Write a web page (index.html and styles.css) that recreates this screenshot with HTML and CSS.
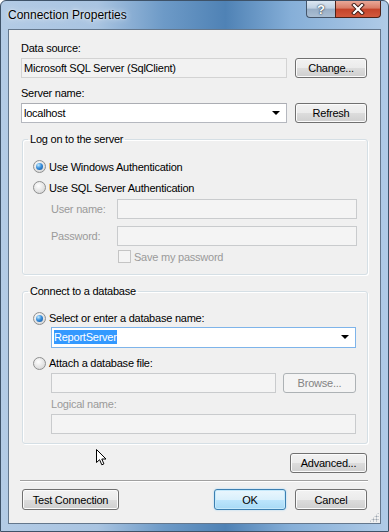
FILE: index.html
```html
<!DOCTYPE html>
<html lang="en">
<head>
    <meta charset="UTF-8">
    <title>Connection Properties</title>
    <link rel="stylesheet" href="styles.css">
</head>
<body>
    <div class="window">
        <div class="titlebar">
            <span class="title">Connection Properties</span>
            <div class="caption-buttons">
                <span class="cap-btn help">?</span>
                <span class="cap-btn close">
                    <svg width="14" height="12" viewBox="0 0 14 12">
                        <path d="M3 2 L11 10 M11 2 L3 10" stroke="#3b1a14" stroke-width="4" stroke-linecap="square"/>
                        <path d="M3 2 L11 10 M11 2 L3 10" stroke="#fff" stroke-width="2.2" stroke-linecap="square"/>
                    </svg>
                </span>
            </div>
        </div>

        <div class="client">
            <span class="lbl">Data source:</span>
            <div class="row">
                <div class="field readonly">Microsoft SQL Server (SqlClient)</div>
                <button class="btn">Change...</button>
            </div>

            <span class="lbl gap-top">Server name:</span>
            <div class="row">
                <div class="field combo">localhost<span class="arrow"></span></div>
                <button class="btn">Refresh</button>
            </div>

            <fieldset class="group group-logon">
                <legend>Log on to the server</legend>
                <div class="opt tall"><span class="radio checked"></span>Use Windows Authentication</div>
                <div class="opt tall"><span class="radio"></span>Use SQL Server Authentication</div>
                <div class="creds">
                    <span class="dim">User name:</span>
                    <div class="field disabled"></div>
                    <span class="dim">Password:</span>
                    <div class="field disabled"></div>
                </div>
                <div class="check-row"><span class="checkbox"></span><span class="dim">Save my password</span></div>
            </fieldset>

            <fieldset class="group group-db">
                <legend>Connect to a database</legend>
                <div class="opt"><span class="radio checked"></span>Select or enter a database name:</div>
                <div class="field combo focus indent"><span class="selected">ReportServer</span><span class="arrow"></span></div>
                <div class="opt opt-attach"><span class="radio"></span>Attach a database file:</div>
                <div class="row file-row indent">
                    <div class="field disabled"></div>
                    <button class="btn off browse">Browse...</button>
                </div>
                <span class="lbl dim indent logical">Logical name:</span>
                <div class="field disabled indent logical-field"></div>
            </fieldset>

            <button class="btn advanced">Advanced...</button>

            <div class="separator"></div>

            <div class="footer">
                <button class="btn test">Test Connection</button>
                <button class="btn ok">OK</button>
                <button class="btn">Cancel</button>
            </div>

            <svg class="pointer" width="13" height="17" viewBox="0 0 13 17">
                <path d="M0.5 0.5 L0.5 13.5 L3.6 10.7 L5.8 15.8 L7.9 14.9 L5.8 10 L10 10 Z" fill="#fff" stroke="#000" stroke-width="1" stroke-linejoin="round"/>
            </svg>
            <span class="grip"></span>
        </div>
    </div>
</body>
</html>
```

FILE: styles.css
```css
* {
    box-sizing: border-box;
}
body {
    margin: 0;
    font-family: "Liberation Sans", Arial, sans-serif;
    font-size: 11px;
    letter-spacing: -0.23px;
    color: #000;
    background: #fff;
}
.window {
    width: 389px;
    height: 532px;
    display: flex;
    flex-direction: column;
    border: 1px solid #3e5268;
    border-radius: 6px 6px 0 0;
    background: linear-gradient(90deg, #b3cbe5 0%, #a9c4e1 25%, #6d9ac7 42%, #4f82b5 58%, #86afd8 75%, #b0cbe7 100%);
}
.titlebar {
    height: 28px;
    display: flex;
    padding-left: 7px;
}
.title {
    font-size: 12px;
    letter-spacing: 0;
    line-height: 16px;
    margin-top: 6px;
    text-shadow: 0 0 6px rgba(255, 255, 255, 0.9), 0 0 2px rgba(255, 255, 255, 0.8);
}
.caption-buttons {
    margin-left: auto;
    margin-right: 7px;
    display: flex;
    align-self: flex-start;
}
.cap-btn {
    height: 17px;
    display: flex;
    align-items: center;
    justify-content: center;
    border: 1px solid #44556a;
    border-top: none;
}
.help {
    width: 29px;
    border-radius: 0 0 0 4px;
    border-right: none;
    background: linear-gradient(#dbe6f1 0%, #bfd0e2 45%, #98aec6 50%, #aabed3 100%);
    color: #fff;
    font-weight: bold;
    font-size: 13px;
    letter-spacing: 0;
    text-shadow: 0 0 2px #24354a, 0 0 1px #24354a;
}
.close {
    width: 46px;
    border-color: #4c2219;
    border-radius: 0 0 4px 0;
    background: linear-gradient(#e9a898 0%, #d97c66 45%, #c4432a 50%, #d2593d 100%);
}
.client {
    flex: 1;
    position: relative;
    margin: 0 7px 7px 7px;
    border: 1px solid #64778c;
    background: #f0f0f0;
    padding: 10px 13px 0 12px;
}
.lbl {
    display: block;
    height: 16px;
    line-height: 16px;
}
.gap-top {
    margin-top: 7px;
}
.row {
    display: flex;
    gap: 8px;
    margin-top: 2px;
}
.field {
    flex: 1;
    height: 20px;
    line-height: 18px;
    padding-left: 2px;
    border: 1px solid #b5b8bf;
    border-top-color: #abadb3;
    background: #fff;
    white-space: nowrap;
}
.readonly {
    background: #f2f2f2;
    border-color: #d3d3d3;
}
.disabled {
    background: #f4f4f4;
    border-color: #c9cbcd;
}
.combo {
    position: relative;
}
.arrow {
    position: absolute;
    right: 6px;
    top: 7px;
    width: 0;
    height: 0;
    border-left: 4px solid transparent;
    border-right: 4px solid transparent;
    border-top: 4px solid #000;
}
.focus {
    height: 21px;
    line-height: 19px;
    border-color: #7eb4ea;
}
.selected {
    background: #3399ff;
    color: #fff;
    padding: 1px 0;
}
.btn {
    width: 72px;
    height: 20px;
    padding: 0;
    font-family: inherit;
    font-size: 11px;
    letter-spacing: -0.23px;
    color: #000;
    border: 1px solid #707070;
    border-radius: 3px;
    background: linear-gradient(#f2f2f2 0%, #ebebeb 50%, #dddddd 50%, #cfcfcf 100%);
    box-shadow: inset 0 0 0 1px #fbfbfb;
}
.btn.off {
    color: #838383;
    border-color: #adb2b5;
    background: #f4f4f4;
    box-shadow: none;
}
.group {
    margin: 8px -1px 0 1px;
    border: 1px solid #d5dfe5;
    border-radius: 3px;
    box-shadow: inset 1px 1px 0 #fff, 1px 1px 0 #fff;
    min-width: 0;
}
.group legend {
    padding: 0 2px;
    margin-left: -5px;
    line-height: 16px;
    height: 16px;
}
.group-logon {
    padding: 9px 10px 11px 10px;
}
.group-db {
    padding: 10px 11px 9px 10px;
}
.opt {
    display: flex;
    align-items: center;
    gap: 3px;
    height: 18px;
}
.opt.tall {
    height: 21px;
}
.opt-attach {
    margin-top: 6px;
}
.radio {
    width: 13px;
    height: 13px;
    border-radius: 50%;
    border: 1px solid #8e8f8f;
    background: radial-gradient(circle at 40% 35%, #ffffff 0%, #e6e6e6 50%, #cfcfcf 100%);
    display: flex;
    align-items: center;
    justify-content: center;
}
.radio.checked::after {
    content: "";
    width: 7px;
    height: 7px;
    border-radius: 50%;
    background: radial-gradient(circle at 35% 30%, #c4ebfd 0%, #3a8fdb 45%, #0d4f99 100%);
}
.creds {
    display: grid;
    grid-template-columns: 66px 1fr;
    row-gap: 7px;
    align-items: center;
    margin-top: 1px;
    padding-left: 18px;
}
.dim {
    color: #9a9a9a;
}
.check-row {
    display: flex;
    align-items: center;
    gap: 3px;
    height: 13px;
    margin-top: 4px;
    padding-left: 85px;
}
.checkbox {
    width: 13px;
    height: 13px;
    border: 1px solid #c4c4c4;
    background: #f4f4f4;
}
.indent {
    margin-left: 18px;
}
.file-row {
    margin-top: 1px;
    gap: 7px;
}
.browse {
    width: 73px;
}
.logical {
    margin-top: 3px;
}
.logical-field {
    flex: none;
    margin-top: 2px;
}
.advanced {
    display: block;
    width: 77px;
    margin: 9px 0 0 auto;
}
.separator {
    height: 2px;
    margin: 7px -1px 0 -1px;
    border-top: 1px solid #a0a0a0;
    border-bottom: 1px solid #fff;
}
.footer {
    display: flex;
    gap: 9px;
    margin-top: 7px;
}
.footer .btn {
    height: 21px;
}
.test {
    width: 97px;
    margin-left: 1px;
}
.btn.ok {
    margin-left: auto;
    border-color: #3c7fb1;
    background: linear-gradient(#eaf6fd 0%, #d9f0fc 50%, #bee6fd 50%, #a7d9f5 100%);
    box-shadow: inset 0 0 0 1px #c5e9fb, 0 0 2px #9fd5f5;
}
.pointer {
    position: absolute;
    left: 87px;
    top: 419px;
}
.grip {
    position: absolute;
    right: 1px;
    bottom: 1px;
    width: 10px;
    height: 10px;
    background: radial-gradient(circle, #9aa3ad 0.8px, transparent 1.2px) 0 0 / 3px 3px;
    clip-path: polygon(100% 0, 100% 100%, 0 100%);
}
```
